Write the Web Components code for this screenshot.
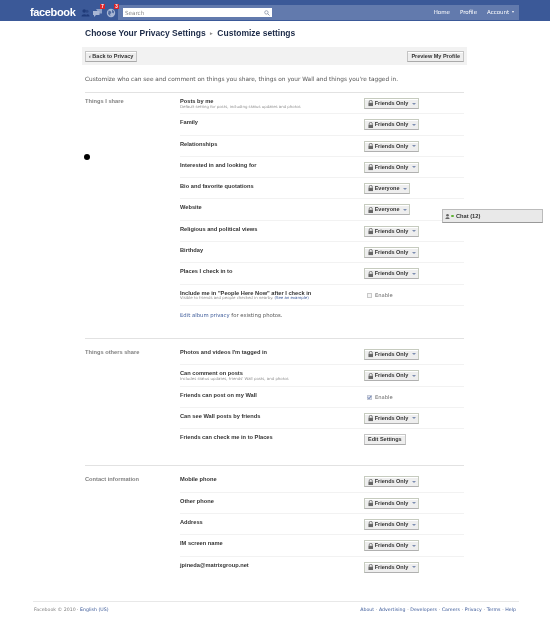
<!DOCTYPE html>
<html>
<head>
<meta charset="utf-8">
<style>
html, body { margin: 0; background: #fff; }
body { font-family: "DejaVu Sans", sans-serif; font-size: 5.5px; color: #333; width: 550px; height: 632px; overflow: hidden; position: relative; filter: blur(.3px); }
</style>
</head>
<body>
<fb-topbar></fb-topbar>
<fb-page>
  <fb-section label="Things I share" extra="Edit album privacy">
    <fb-row title="Posts by me" hint="Default setting for posts, including status updates and photos"><fb-privacy></fb-privacy></fb-row>
    <fb-row title="Family"><fb-privacy></fb-privacy></fb-row>
    <fb-row title="Relationships"><fb-privacy></fb-privacy></fb-row>
    <fb-row title="Interested in and looking for"><fb-privacy></fb-privacy></fb-row>
    <fb-row title="Bio and favorite quotations"><fb-privacy value="Everyone"></fb-privacy></fb-row>
    <fb-row title="Website"><fb-privacy value="Everyone"></fb-privacy></fb-row>
    <fb-row title="Religious and political views"><fb-privacy></fb-privacy></fb-row>
    <fb-row title="Birthday"><fb-privacy></fb-privacy></fb-row>
    <fb-row title="Places I check in to"><fb-privacy></fb-privacy></fb-row>
    <fb-row title="Include me in &quot;People Here Now&quot; after I check in" hint="Visible to friends and people checked in nearby." link="(See an example)"><fb-enable></fb-enable></fb-row>
  </fb-section>
  <fb-section label="Things others share">
    <fb-row title="Photos and videos I'm tagged in"><fb-privacy></fb-privacy></fb-row>
    <fb-row title="Can comment on posts" hint="Includes status updates, friends' Wall posts, and photos"><fb-privacy></fb-privacy></fb-row>
    <fb-row title="Friends can post on my Wall"><fb-enable checked></fb-enable></fb-row>
    <fb-row title="Can see Wall posts by friends"><fb-privacy></fb-privacy></fb-row>
    <fb-row title="Friends can check me in to Places" last><fb-button>Edit Settings</fb-button></fb-row>
  </fb-section>
  <fb-section label="Contact information">
    <fb-row title="Mobile phone"><fb-privacy></fb-privacy></fb-row>
    <fb-row title="Other phone"><fb-privacy></fb-privacy></fb-row>
    <fb-row title="Address"><fb-privacy></fb-privacy></fb-row>
    <fb-row title="IM screen name"><fb-privacy></fb-privacy></fb-row>
    <fb-row title="jpineda@matrixgroup.net" last><fb-privacy></fb-privacy></fb-row>
  </fb-section>
</fb-page>
<fb-footer></fb-footer>
<fb-chat></fb-chat>
<fb-dot></fb-dot>

<script>
const lockSvg = `<svg width="5.5" height="6.5" viewBox="0 0 6 7"><path d="M1.3 3V2a1.7 1.7 0 0 1 3.4 0v1" fill="none" stroke="#666" stroke-width=".9"/><rect x=".5" y="3" width="5" height="3.6" fill="#666"/></svg>`;

class FbTopbar extends HTMLElement {
    constructor() {
        super();
        this.attachShadow({mode: 'open'}).innerHTML = `
            <style>
                :host { display: block; height: 21px; background: #3b5998; }
                #bar { display: flex; height: 20px; padding-left: 30px; box-sizing: border-box; }
                #logo { width: 45px; font: bold 11px/25px "Liberation Sans", sans-serif; letter-spacing: -.35px; color: #fff; }
                #jewels { display: flex; align-items: center; gap: 3px; width: 43px; padding-left: 6px; box-sizing: border-box; }
                #jewels span { position: relative; display: block; width: 11px; height: 10px; margin-top: 5px; }
                #jewels svg { display: block; }
                #jewels b { position: absolute; top: -4px; right: -2px; background: #d8232a; color: #fff; font: bold 4.5px/5px "Liberation Sans", sans-serif; padding: 0 1.2px; }
                #main { flex: 0 0 401px; height: 15px; margin-top: 5px; background: #627aad; display: flex; align-items: flex-start; box-sizing: border-box; }
                #search { width: 149px; height: 9px; margin: 3px 0 0 5px; background: #fff; display: flex; justify-content: space-between; align-items: center; font-size: 5.6px; color: #888; padding: 0 2px; box-sizing: border-box; }
                nav { margin-left: auto; display: flex; gap: 10px; color: #fff; font: 5.5px/15px "DejaVu Sans", sans-serif; padding-right: 5px; }
                nav i { display: inline-block; border: 1.5px solid transparent; border-top: 2px solid #fff; border-bottom: 0; vertical-align: 1px; margin-left: 1px; }
            </style>
            <div id="bar">
                <div id="logo">facebook</div>
                <div id="jewels">
                    <span style="width:8px"><svg width="9" height="9" viewBox="0 0 9 9"><circle cx="3.2" cy="3" r="1.8" fill="#1f3a78"/><circle cx="6" cy="3.2" r="1.5" fill="#2a4684"/><path d="M.5 8.5c0-3 5.5-3 5.5 0zM6 8.5h2.6c0-2-1.6-2.6-3-2.2z" fill="#1f3a78"/></svg></span>
                    <span><svg width="11" height="10" viewBox="0 0 11 10"><path d="M4 1h6v4.5H7z" fill="#8fa1c7"/><path d="M1 3h6.5v4H4L2 9V7H1z" fill="#a9b7d4"/></svg><b>7</b></span>
                    <span><svg width="10" height="10" viewBox="0 0 10 10"><circle cx="5" cy="5" r="4.2" fill="#a9b7d4"/><path d="M2.5 2.5l2 .5 1 2-1.5 1 .5 2.2L2 6zM6 1.6l2.2 1.8-.6 2-1.6-1z" fill="#4f6aa0"/></svg><b>3</b></span>
                </div>
                <div id="main">
                    <div id="search"><span>Search</span>
                        <svg width="6" height="6" viewBox="0 0 6 6"><circle cx="2.4" cy="2.4" r="1.7" fill="none" stroke="#8a94a8" stroke-width=".8"/><path d="M3.6 3.6L5.5 5.5" stroke="#8a94a8" stroke-width=".9"/></svg>
                    </div>
                    <nav><span>Home</span><span>Profile</span><span>Account <i></i></span></nav>
                </div>
            </div>`;
    }
}
customElements.define('fb-topbar', FbTopbar);

class FbPage extends HTMLElement {
    constructor() {
        super();
        this.attachShadow({mode: 'open'}).innerHTML = `
            <style>
                :host { display: block; width: 385px; margin-left: 82px; }
                h1 { margin: 0; padding: 7px 0 0 3px; height: 26px; box-sizing: border-box; font: bold 8.5px/10px "Liberation Sans", sans-serif; color: #1c2a47; white-space: nowrap; }
                h1 i { font-style: normal; color: #8c8c8c; font-size: 5px; padding: 0 2px; vertical-align: 1px; }
                #tools { display: flex; justify-content: space-between; align-items: center; height: 18px; background: #f2f2f2; padding: 0 3px; }
                p { margin: 0; padding: 10px 3px 0; height: 27px; box-sizing: border-box; font: 5.8px/8px "DejaVu Sans", sans-serif; color: #555; white-space: nowrap; }
            </style>
            <h1>Choose Your Privacy Settings <i>&#9656;</i> Customize settings</h1>
            <div id="tools"><fb-button>&#8249; Back to Privacy</fb-button><fb-button>Preview My Profile</fb-button></div>
            <p>Customize who can see and comment on things you share, things on your Wall and things you're tagged in.</p>
            <slot></slot>`;
    }
}
customElements.define('fb-page', FbPage);

class FbSection extends HTMLElement {
    constructor() {
        super();
        this.attachShadow({mode: 'open'}).innerHTML = `
            <style>
                :host { display: grid; grid-template-columns: 95px 284px; margin-left: 3px; width: 379px; border-top: 1px solid #e2e2e2; padding-bottom: 15px; }
                :host(:not(:first-of-type)) { padding-top: 5px; }
                #label { font: bold 5.7px/8px "Liberation Sans", sans-serif; color: #808080; padding-top: 4px; white-space: nowrap; }
                #extra { padding: 5px 0 0; height: 12px; font: 5.3px/8px "DejaVu Sans", sans-serif; color: #555; }
                #extra span { color: #3b5998; }
            </style>
            <div id="label"></div>
            <div><slot></slot><div id="extra"><span></span> for existing photos.</div></div>`;
    }

    connectedCallback() {
        this.shadowRoot.querySelector('#label').textContent = this.getAttribute('label');
        const extra = this.shadowRoot.querySelector('#extra');
        if(this.hasAttribute('extra')) {
            extra.querySelector('span').textContent = this.getAttribute('extra');
        } else {
            extra.remove();
        }
    }
}
customElements.define('fb-section', FbSection);

class FbRow extends HTMLElement {
    constructor() {
        super();
        this.attachShadow({mode: 'open'}).innerHTML = `
            <style>
                :host { display: flex; height: 21.3px; box-sizing: border-box; border-bottom: 1px solid #f2f2f2; }
                :host([last]) { border-bottom-color: transparent; }
                #text { width: 184px; padding-top: 4px; }
                #title { font: bold 5.7px/8px "Liberation Sans", sans-serif; color: #333; white-space: nowrap; }
                #hint { font: 3.9px/5px "DejaVu Sans", sans-serif; color: #909090; margin-top: -1.5px; white-space: nowrap; }
                #hint span { color: #3b5998; }
                #ctl { padding-top: 5px; }
            </style>
            <div id="text"><div id="title"></div><div id="hint"></div></div>
            <div id="ctl"><slot></slot></div>`;
    }

    connectedCallback() {
        const root = this.shadowRoot;
        root.querySelector('#title').textContent = this.getAttribute('title');
        const hint = root.querySelector('#hint');
        hint.textContent = this.getAttribute('hint') || '';
        if(this.hasAttribute('link')) {
            const a = document.createElement('span');
            a.textContent = ' ' + this.getAttribute('link');
            hint.append(a);
        }
    }
}
customElements.define('fb-row', FbRow);

class FbButton extends HTMLElement {
    constructor() {
        super();
        this.attachShadow({mode: 'open'}).innerHTML = `
            <style>
                :host { display: inline-flex; align-items: center; height: 11px; padding: 0 3px; box-sizing: border-box; background: #eee; border: 1px solid #c4c4c4; border-bottom-color: #aaa; box-shadow: inset 0 1px 0 #fff; font: bold 5.5px/9px "Liberation Sans", sans-serif; color: #333; white-space: nowrap; }
            </style>
            <slot></slot>`;
    }
}
customElements.define('fb-button', FbButton);

class FbPrivacy extends HTMLElement {
    constructor() {
        super();
        this.attachShadow({mode: 'open'}).innerHTML = `
            <style>
                :host { display: inline-flex; align-items: center; gap: 1.7px; height: 11px; padding: 0 2.5px; box-sizing: border-box; background: #eee; border: 1px solid #c6cbbf; border-bottom-color: #b0b0b0; box-shadow: inset 0 1px 0 #fff; font: bold 5.5px/9px "Liberation Sans", sans-serif; color: #333; white-space: nowrap; }
                svg { display: block; }
                i { border: 2px solid transparent; border-top: 2px solid #7d8db0; border-bottom: 0; margin-left: 1.5px; }
            </style>
            ${lockSvg}<span></span><i></i>`;
    }

    connectedCallback() {
        this.shadowRoot.querySelector('span').textContent = this.getAttribute('value') || 'Friends Only';
    }
}
customElements.define('fb-privacy', FbPrivacy);

class FbEnable extends HTMLElement {
    constructor() {
        super();
        this.attachShadow({mode: 'open'}).innerHTML = `
            <style>
                :host { display: inline-flex; align-items: center; gap: 3px; padding: 1.5px 0 0 3px; font: 5.2px/8px "DejaVu Sans", sans-serif; color: #666; }
                #box { width: 5px; height: 5px; box-sizing: border-box; border: 1px solid #c8c8c8; background: #f4f4f4; }
                :host([checked]) #box { background: #dfe3ee; border-color: #c4c9d6; }
            </style>
            <div id="box"></div><span>Enable</span>`;
    }

    connectedCallback() {
        if(this.hasAttribute('checked')) {
            this.shadowRoot.querySelector('#box').innerHTML = '<svg width="5" height="5" viewBox="0 0 5 5" style="display:block;margin:-1px"><path d="M1 2.5l1 1.2L4.2 1" fill="none" stroke="#3b5998" stroke-width=".8"/></svg>';
        }
    }
}
customElements.define('fb-enable', FbEnable);

class FbFooter extends HTMLElement {
    constructor() {
        super();
        this.attachShadow({mode: 'open'}).innerHTML = `
            <style>
                :host { display: flex; justify-content: space-between; position: absolute; left: 33px; top: 601px; width: 486px; box-sizing: border-box; border-top: 1px solid #e8e8e8; padding: 4px 3px 0 1px; font: 4.7px/8px "DejaVu Sans", sans-serif; color: #808080; white-space: nowrap; }
                a { color: #3b5998; }
                #links { display: flex; gap: 1.7px; }
                i { font-style: normal; color: #999; }
            </style>
            <div>Facebook &copy; 2010 &middot; <a>English (US)</a></div>
            <div id="links"><a>About</a><i>&middot;</i><a>Advertising</a><i>&middot;</i><a>Developers</a><i>&middot;</i><a>Careers</a><i>&middot;</i><a>Privacy</a><i>&middot;</i><a>Terms</a><i>&middot;</i><a>Help</a></div>`;
    }
}
customElements.define('fb-footer', FbFooter);

class FbChat extends HTMLElement {
    constructor() {
        super();
        this.attachShadow({mode: 'open'}).innerHTML = `
            <style>
                :host { position: absolute; left: 442px; top: 209px; width: 101px; height: 14px; box-sizing: border-box; background: #e9e9e9; border: 1px solid #bbb; border-bottom-color: #999; display: flex; align-items: center; gap: 1px; padding-left: 2px; font: bold 5.7px/8px "Liberation Sans", sans-serif; color: #333; }
                svg { display: block; }
                i { width: 2.5px; height: 2.5px; border-radius: 50%; background: #5fb234; margin-right: 1.5px; }
            </style>
            <svg width="5" height="7" viewBox="0 0 6 7"><circle cx="3" cy="2" r="1.6" fill="#666"/><path d="M.5 6.5c0-3 5-3 5 0z" fill="#666"/></svg><i></i><span>Chat (12)</span>`;
    }
}
customElements.define('fb-chat', FbChat);

class FbDot extends HTMLElement {
    constructor() {
        super();
        this.attachShadow({mode: 'open'}).innerHTML = `
            <style>
                :host { position: absolute; left: 84px; top: 154px; width: 6px; height: 6px; border-radius: 50%; background: #000; }
            </style>`;
    }
}
customElements.define('fb-dot', FbDot);
</script>
</body>
</html>
